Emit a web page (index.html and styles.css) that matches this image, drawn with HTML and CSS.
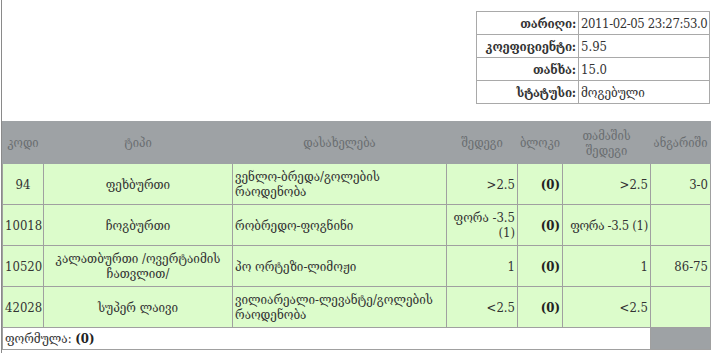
FILE: index.html
```html
<!DOCTYPE html>
<html lang="ka">
<head>
<meta charset="utf-8">
<link rel="stylesheet" href="styles.css">
</head>
<body>
<div class="page">
  <div class="info-wrap">
    <table class="info">
      <tr><th>თარიღი:</th><td class="date">2011-02-05 23:27:53.0</td></tr>
      <tr><th>კოეფიციენტი:</th><td>5.95</td></tr>
      <tr><th>თანხა:</th><td>15.0</td></tr>
      <tr><th>სტატუსი:</th><td>მოგებული</td></tr>
    </table>
  </div>
  <table class="bets">
    <colgroup>
      <col class="c-code"><col class="c-type"><col class="c-name"><col class="c-res"><col class="c-block"><col class="c-game"><col class="c-score">
    </colgroup>
    <thead>
      <tr>
        <th>კოდი</th>
        <th>ტიპი</th>
        <th>დასახელება</th>
        <th>შედეგი</th>
        <th>ბლოკი</th>
        <th>თამაშის შედეგი</th>
        <th>ანგარიში</th>
      </tr>
    </thead>
    <tbody>
      <tr>
        <td class="center">94</td>
        <td class="center">ფეხბურთი</td>
        <td>ვენლო-ბრედა/გოლების რაოდენობა</td>
        <td class="right">&gt;2.5</td>
        <td class="right"><b>(0)</b></td>
        <td class="right">&gt;2.5</td>
        <td class="right">3-0</td>
      </tr>
      <tr>
        <td class="center">10018</td>
        <td class="center">ჩოგბურთი</td>
        <td>რობრედო-ფოგნინი</td>
        <td class="right">ფორა -3.5 (1)</td>
        <td class="right"><b>(0)</b></td>
        <td class="right nowrap">ფორა -3.5 (1)</td>
        <td class="right"></td>
      </tr>
      <tr>
        <td class="center">10520</td>
        <td class="center">კალათბურთი /ოვერტაიმის ჩათვლით/</td>
        <td>პო ორტეზი-ლიმოჟი</td>
        <td class="right">1</td>
        <td class="right"><b>(0)</b></td>
        <td class="right">1</td>
        <td class="right">86-75</td>
      </tr>
      <tr>
        <td class="center">42028</td>
        <td class="center">სუპერ ლაივი</td>
        <td>ვილიარეალი-ლევანტე/გოლების რაოდენობა</td>
        <td class="right">&lt;2.5</td>
        <td class="right"><b>(0)</b></td>
        <td class="right">&lt;2.5</td>
        <td class="right"></td>
      </tr>
      <tr class="foot">
        <td colspan="6">ფორმულა: <b>(0)</b></td>
        <td class="foot-end"></td>
      </tr>
    </tbody>
  </table>
</div>
</body>
</html>
```
FILE: styles.css
```css
html, body {
  margin: 0;
  padding: 0;
  background: #fff;
}
body {
  font-family: "DejaVu Serif Condensed", "DejaVu Sans", serif;
  font-size: 13px;
  color: #333;
}
.page {
  margin-left: 1px;
  border-left: 1px solid #8a8a8a;
  height: 353px;
  box-sizing: border-box;
  overflow: hidden;
}
.info-wrap {
  display: flex;
  justify-content: flex-end;
  padding-top: 11px;
  padding-right: 5px;
}
.info {
  border-collapse: collapse;
  width: 234px;
  table-layout: fixed;
}
.info th, .info td {
  border: 1px solid #a9a9a9;
  height: 22px;
  padding: 0 2px;
  white-space: nowrap;
  overflow: hidden;
}
.info th {
  text-align: right;
  font-weight: bold;
  width: 97px;
  letter-spacing: -0.2px;
}
.info td {
  text-align: left;
}
.info td.date {
  letter-spacing: -0.4px;
}
.bets {
  margin-top: 17px;
  border-collapse: collapse;
  table-layout: fixed;
  width: 708px;
}
.c-code { width: 41px; }
.c-type { width: 189px; }
.c-name { width: 214px; }
.c-res { width: 71px; }
.c-block { width: 45px; }
.c-game { width: 88px; }
.c-score { width: 60px; }
.bets thead th {
  background: #9ea2a5;
  color: #6a6e71;
  font-weight: normal;
  font-size: 12.5px;
  height: 41px;
  padding: 0 1px;
  border: 1px solid #9ea2a5;
  text-align: center;
  vertical-align: middle;
}
.bets tbody td {
  background: #dcfccb;
  border: 1px solid #a0a0a0;
  height: 40px;
  padding: 0 2px;
  vertical-align: middle;
  text-align: left;
}
.bets td.center { text-align: center; }
.bets td.right { text-align: right; }
.bets td.nowrap { white-space: nowrap; letter-spacing: -0.3px; }
.bets b { color: #222; }
.bets tr.foot td {
  background: #fff;
  height: 21px;
}
.bets tr.foot td.foot-end {
  background: #9ea2a5;
}
```
